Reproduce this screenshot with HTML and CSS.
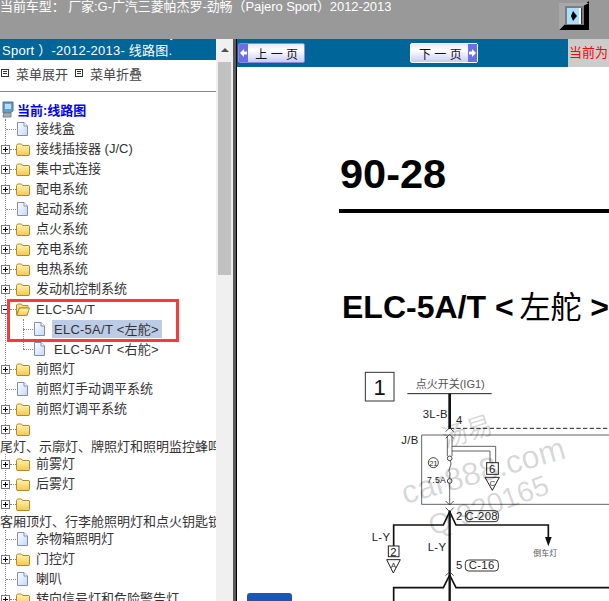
FILE: index.html
```html
<!DOCTYPE html>
<html>
<head>
    <title>线路图</title>
    <meta name="viewport" content="width=device-width, initial-scale=1">
    <link rel="stylesheet" href="styles.css">
</head>

<body>
<svg class="svg-defs">
    <defs>
        <linearGradient id="folderFill" x1="0" y1="0" x2="0" y2="1">
            <stop offset="0" stop-color="#fff4b8"/>
            <stop offset="1" stop-color="#f2c84e"/>
        </linearGradient>
        <linearGradient id="pageFill" x1="0" y1="0" x2="1" y2="1">
            <stop offset="0" stop-color="#ffffff"/>
            <stop offset="1" stop-color="#c4d8f4"/>
        </linearGradient>
    </defs>
    <symbol id="folder" viewBox="0 0 14 14">
        <path d="M.5 3.5 L1.5 2 H5.5 L6.5 3.5 H13 L13.5 4 V12.5 L13 13.5 H1 L.5 12.5 Z" fill="url(#folderFill)" stroke="#b58a25"/>
    </symbol>
    <symbol id="folder-open" viewBox="0 0 14 14">
        <path d="M.5 3 L1.5 2 H5.5 L6.5 3.5 H12 V6 H3.5 L.5 12.5 Z" fill="#f7dc85" stroke="#b58a25"/>
        <path d="M3.5 6 H13.5 L11 13.5 H.7 Z" fill="url(#folderFill)" stroke="#b58a25"/>
    </symbol>
    <symbol id="page" viewBox="0 0 13 14">
        <path d="M1.5 .5 H8 L11.5 4 V13.5 H1.5 Z" fill="url(#pageFill)" stroke="#7f8cc0"/>
        <path d="M8 .5 V4 H11.5" fill="#fff" stroke="#7f8cc0"/>
    </symbol>
    <symbol id="screen" viewBox="0 0 14 17">
        <path d="M2 1 H12 V10 L9 12 H2 Z" fill="#5f9fd6" stroke="#54708f"/>
        <path d="M4 3 H10 V8 H4 Z" fill="#b7dcf5"/>
        <path d="M3 12 H10 V16 H2 Z" fill="#a9afb8" stroke="#7b8088"/>
    </symbol>
</svg>

<div class="app">
    <div class="topbar">
        <div class="topbar-text">当前车型： 厂家:G-广汽三菱帕杰罗-劲畅（Pajero Sport）2012-2013</div>
        <svg class="toggle-frame" width="30" height="29" viewBox="0 0 30 29">
            <path d="M0 29 L6 23 H24 V5 L30 0 V29 Z" fill="#000"/>
            <path d="M0 29 V2 H1 L6 5 V23 Z" fill="#a8a8a8"/>
            <path d="M0 2 H30 L24 5 H6 Z" fill="#a8a8a8"/>
            <rect x="6" y="5" width="19" height="19" fill="#7d7d7d"/>
            <rect x="8" y="7" width="15" height="16" fill="#a9e0ff"/>
            <rect x="20" y="7" width="2" height="16" fill="#fff"/>
            <rect x="22" y="7" width="1" height="16" fill="#333"/>
            <path d="M14 10 L18 15 L14 20 L12 15 Z" fill="#000"/>
        </svg>
    </div>

    <div class="main">
        <div class="sidebar">
            <div class="side-title">
                <div>G-广汽三菱帕杰罗-劲畅（Pajero</div>
                <div>Sport ）-2012-2013- 线路图.</div>
            </div>
            <div class="menu-row">
                <span class="menu-box"></span><span class="menu-text">菜单展开</span>
                <span class="menu-box"></span><span class="menu-text">菜单折叠</span>
            </div>
            <div class="side-rule"></div>

            <div class="root-row">
                <svg class="root-icon" width="14" height="17"><use href="#screen"/></svg>
                <span>当前:线路图</span>
            </div>

            <div class="tree">
                <div class="row"><span class="link long"></span><svg class="ico" width="13" height="14"><use href="#page"/></svg><span class="label">接线盒</span></div>
                <div class="row"><span class="box plus"></span><span class="link"></span><svg class="ico" width="14" height="14"><use href="#folder"/></svg><span class="label">接线插接器 (J/C)</span></div>
                <div class="row"><span class="box plus"></span><span class="link"></span><svg class="ico" width="14" height="14"><use href="#folder"/></svg><span class="label">集中式连接</span></div>
                <div class="row"><span class="box plus"></span><span class="link"></span><svg class="ico" width="14" height="14"><use href="#folder"/></svg><span class="label">配电系统</span></div>
                <div class="row"><span class="link long"></span><svg class="ico" width="13" height="14"><use href="#page"/></svg><span class="label">起动系统</span></div>
                <div class="row"><span class="box plus"></span><span class="link"></span><svg class="ico" width="14" height="14"><use href="#folder"/></svg><span class="label">点火系统</span></div>
                <div class="row"><span class="box plus"></span><span class="link"></span><svg class="ico" width="14" height="14"><use href="#folder"/></svg><span class="label">充电系统</span></div>
                <div class="row"><span class="box plus"></span><span class="link"></span><svg class="ico" width="14" height="14"><use href="#folder"/></svg><span class="label">电热系统</span></div>
                <div class="row"><span class="box plus"></span><span class="link"></span><svg class="ico" width="14" height="14"><use href="#folder"/></svg><span class="label">发动机控制系统</span></div>
                <div class="row"><span class="box"></span><span class="link"></span><svg class="ico" width="14" height="14"><use href="#folder-open"/></svg><span class="label elc">ELC-5A/T</span></div>
                <div class="sub-tree">
                    <div class="row"><span class="link"></span><svg class="ico-sub" width="13" height="14"><use href="#page"/></svg><span class="label elc selected">ELC-5A/T &lt;左舵&gt;</span></div>
                    <div class="row"><span class="link"></span><svg class="ico-sub" width="13" height="14"><use href="#page"/></svg><span class="label elc">ELC-5A/T &lt;右舵&gt;</span></div>
                </div>
                <div class="row"><span class="box plus"></span><span class="link"></span><svg class="ico" width="14" height="14"><use href="#folder"/></svg><span class="label">前照灯</span></div>
                <div class="row"><span class="link long"></span><svg class="ico" width="13" height="14"><use href="#page"/></svg><span class="label">前照灯手动调平系统</span></div>
                <div class="row"><span class="box plus"></span><span class="link"></span><svg class="ico" width="14" height="14"><use href="#folder"/></svg><span class="label">前照灯调平系统</span></div>
                <div class="row"><span class="box plus"></span><span class="link"></span><svg class="ico" width="14" height="14"><use href="#folder"/></svg></div>
                <div class="wrap-row">尾灯、示廓灯、牌照灯和照明监控蜂鸣器</div>
                <div class="row"><span class="box plus"></span><span class="link"></span><svg class="ico" width="14" height="14"><use href="#folder"/></svg><span class="label">前雾灯</span></div>
                <div class="row"><span class="box plus"></span><span class="link"></span><svg class="ico" width="14" height="14"><use href="#folder"/></svg><span class="label">后雾灯</span></div>
                <div class="row"><span class="box plus"></span><span class="link"></span><svg class="ico" width="14" height="14"><use href="#folder"/></svg></div>
                <div class="wrap-row">客厢顶灯、行李舱照明灯和点火钥匙锁照明灯</div>
                <div class="row"><span class="link long"></span><svg class="ico" width="13" height="14"><use href="#page"/></svg><span class="label">杂物箱照明灯</span></div>
                <div class="row"><span class="box plus"></span><span class="link"></span><svg class="ico" width="14" height="14"><use href="#folder"/></svg><span class="label">门控灯</span></div>
                <div class="row"><span class="link long"></span><svg class="ico" width="13" height="14"><use href="#page"/></svg><span class="label">喇叭</span></div>
                <div class="row"><span class="box plus"></span><span class="link"></span><svg class="ico" width="14" height="14"><use href="#folder"/></svg><span class="label">转向信号灯和危险警告灯</span></div>
            </div>
            <div class="red-mark"></div>
        </div>

        <div class="scrollbar">
            <div class="scroll-up"><span class="scroll-arrow"></span></div>
            <div class="scroll-thumb"></div>
        </div>
        <div class="splitter"></div>

        <div class="content">
            <div class="toolbar">
                <div class="nav-btn">
                    <svg class="nav-arrow" width="9" height="18" viewBox="0 0 9 18"><rect width="9" height="18" fill="#6b6fe4"/><path d="M1 9 L5 5 V7.5 H8 V10.5 H5 V13 Z" fill="#fff"/></svg>
                    <span class="nav-text">上 一 页</span>
                </div>
                <div class="nav-btn nav-next">
                    <span class="nav-text">下 一 页</span>
                    <svg class="nav-arrow" width="9" height="18" viewBox="0 0 9 18"><rect width="9" height="18" fill="#6b6fe4"/><path d="M8 9 L4 5 V7.5 H1 V10.5 H4 V13 Z" fill="#fff"/></svg>
                </div>
                <div class="current">当前为</div>
            </div>

            <div class="sheet">
                <div class="sheet-no">90-28</div>
                <div class="sheet-rule"></div>
                <div class="sheet-title">ELC-5A/T &lt; <span class="sheet-cjk">左舵</span> &gt;</div>

                <svg class="diagram" width="259" height="241" viewBox="0 0 777 723">
                    <rect x="46" y="34" width="86" height="86" fill="none" stroke="#333" stroke-width="3"/>
                    <text x="89" y="102" class="d-one" text-anchor="middle">1</text>
                    <text x="197" y="82" class="d-head">点火开关(IG1)</text>
                    <path d="M172 98 H425" stroke="#222" stroke-width="3" fill="none"/>
                    <path d="M299 98 V204" stroke="#111" stroke-width="8" fill="none"/>
                    <text x="218" y="170" class="d-mono">3L-B</text>
                    <text x="318" y="190" class="d-mono">4</text>
                    <path d="M299 202 H777" stroke="#222" stroke-width="3" stroke-dasharray="13 7" fill="none"/>
                    <path d="M777 222 H215 V430 H777" stroke="#444" stroke-width="2.5" fill="none"/>
                    <text x="154" y="250" class="d-mono">J/B</text>

                    <path d="M287 212 L299 200 L311 212 M287 232 L299 220 L311 232" stroke="#333" stroke-width="2.5" fill="none"/>
                    <path d="M292 226 V285 M306 226 V285" stroke="#444" stroke-width="2.5" fill="none"/>
                    <path d="M306 256 H437 V305 M306 270 H420 V305" stroke="#444" stroke-width="2.5" fill="none"/>
                    <rect x="410" y="305" width="35" height="35" fill="#fff" stroke="#222" stroke-width="3"/>
                    <text x="427" y="335" class="d-mono" text-anchor="middle">6</text>
                    <path d="M405 349 H448 L427 388 Z" fill="#fff" stroke="#222" stroke-width="3"/>
                    <text x="427" y="374" class="d-small" text-anchor="middle">C</text>

                    <circle cx="250" cy="305" r="15" fill="none" stroke="#222" stroke-width="2.5"/>
                    <text x="250" y="315" class="d-small" text-anchor="middle">21</text>
                    <circle cx="299" cy="292" r="7" fill="#fff" stroke="#222" stroke-width="2.5"/>
                    <path d="M300 299 C310 312 290 325 300 336 L299 353" stroke="#333" stroke-width="2.5" fill="none"/>
                    <circle cx="299" cy="360" r="7" fill="#fff" stroke="#222" stroke-width="2.5"/>
                    <text x="231" y="366" class="d-mono d-tight">7.5A</text>
                    <path d="M299 367 V432" stroke="#444" stroke-width="2.5" fill="none"/>
                    <path d="M287 420 L299 432 L311 420 M287 440 L299 452 L311 440" stroke="#333" stroke-width="2.5" fill="none"/>

                    <path d="M299 450 V723" stroke="#111" stroke-width="7" fill="none"/>
                    <path d="M131 560 V492 H280 L299 452 L318 492 H595 V530" stroke="#111" stroke-width="5" fill="none"/>
                    <path d="M585 528 H605 L595 556 Z" fill="#111"/>
                    <text x="318" y="476" class="d-mono">2</text>
                    <rect x="346" y="449" width="99" height="33" rx="10" fill="#fff" stroke="#333" stroke-width="3"/>
                    <text x="395" y="477" class="d-mono" text-anchor="middle">C-208</text>
                    <text x="65" y="540" class="d-mono">L-Y</text>
                    <text x="233" y="570" class="d-mono">L-Y</text>
                    <text x="550" y="584" class="d-note">倒车灯</text>
                    <rect x="115" y="555" width="32" height="32" fill="#fff" stroke="#222" stroke-width="3"/>
                    <text x="131" y="584" class="d-mono" text-anchor="middle">2</text>
                    <path d="M110 596 H151 L130 636 Z" fill="#fff" stroke="#222" stroke-width="3"/>
                    <text x="130" y="620" class="d-small" text-anchor="middle">A</text>
                    <text x="318" y="624" class="d-mono">5</text>
                    <rect x="346" y="597" width="99" height="33" rx="10" fill="#fff" stroke="#333" stroke-width="3"/>
                    <text x="395" y="625" class="d-mono" text-anchor="middle">C-16</text>
                    <path d="M287 644 L299 632 L311 644" stroke="#333" stroke-width="2.5" fill="none"/>
                    <path d="M131 723 V680 H280 L299 642 L318 680 H777" stroke="#111" stroke-width="5" fill="none"/>

                    <text x="285" y="262" class="d-mark d-mark-cjk" transform="rotate(-18 285 262)">汤易</text>
                    <text x="165" y="430" class="d-mark" transform="rotate(-16 165 430)">car888.com</text>
                    <text x="248" y="525" class="d-mark d-mark-qq" transform="rotate(-20 248 525)">Q 920165</text>
                </svg>
            </div>
            <div class="blue-tab"></div>
        </div>
    </div>
</div>
</body>
</html>
```

FILE: styles.css
```css
html, body {
    margin: 0;
    padding: 0;
    height: 100%;
    overflow: hidden;
    background: #fff;
    font-family: "Liberation Sans", "Noto Sans CJK SC", sans-serif;
}
.svg-defs {
    position: absolute;
    width: 0;
    height: 0;
}
.app {
    display: flex;
    flex-direction: column;
    height: 601px;
    overflow: hidden;
}

/* top bar */
.topbar {
    display: flex;
    justify-content: space-between;
    height: 39px;
    flex: none;
    background-color: #999999;
    color: #fff;
    font-size: 13px;
}
.topbar-text {
    line-height: 13px;
    letter-spacing: -0.07px;
    white-space: nowrap;
    overflow: hidden;
}
.toggle-frame {
    flex: none;
    margin: 1px 20px 0 0;
}

.main {
    display: flex;
    flex: 1;
    min-height: 0;
}

/* left menu */
.sidebar {
    position: relative;
    width: 216px;
    flex: none;
    overflow: hidden;
}
.side-title {
    display: flex;
    flex-direction: column;
    justify-content: flex-end;
    height: 21px;
    overflow: hidden;
    padding-left: 2px;
    background-color: #006699;
    color: #fff;
    font-size: 13px;
    letter-spacing: 0.25px;
    line-height: 18px;
    white-space: nowrap;
}
.side-title div {
    flex: none;
}
.menu-row {
    display: flex;
    align-items: center;
    height: 26px;
    font-size: 13px;
    color: #444;
}
.menu-box {
    box-sizing: border-box;
    width: 8px;
    height: 8px;
    margin-left: 1px;
    border: 1px solid #333;
    background: linear-gradient(#333, #333) center 1px / 4px 1px no-repeat,
                linear-gradient(#333, #333) center 3px / 4px 1px no-repeat;
}
.menu-text {
    margin: 0 6px 0 7px;
}
.side-rule {
    height: 1px;
    margin-top: 5px;
    margin-bottom: 7px;
    background-color: #888;
}
.root-row {
    display: flex;
    align-items: center;
    height: 20px;
    font-size: 13px;
    font-weight: bold;
    color: #0000ff;
}
.root-icon {
    margin: 0 2px 0 1px;
}

.tree {
    margin-left: 5px;
    border-left: 1px dotted #888;
    font-size: 13px;
    color: #333;
}
.row {
    display: flex;
    align-items: center;
    height: 20px;
    white-space: nowrap;
}
.box {
    position: relative;
    box-sizing: border-box;
    flex: none;
    width: 9px;
    height: 9px;
    margin-left: -5px;
    border: 1px solid #777;
    background: #fff linear-gradient(#000, #000) center / 5px 1px no-repeat;
}
.plus::after {
    content: "";
    position: absolute;
    left: 3px;
    top: 1px;
    width: 1px;
    height: 5px;
    background-color: #000;
}
.link {
    flex: none;
    width: 6px;
    border-top: 1px dotted #888;
}
.link.long {
    width: 10px;
}
.ico {
    flex: none;
    margin-right: 6px;
}
svg.ico[width="13"] {
    margin-right: 7px;
}
.ico-sub {
    flex: none;
    margin-right: 8px;
}
.label {
    line-height: 18px;
}
.elc {
    padding-top: 1px;
    line-height: 17px;
    letter-spacing: 0.25px;
}
.selected {
    margin-left: -2px;
    padding: 1px 3px 0 2px;
    background-color: #bccbe6;
}
.sub-tree {
    position: relative;
    margin-left: 17px;
}
.sub-tree::before {
    content: "";
    position: absolute;
    left: 0;
    top: 0;
    bottom: 10px;
    border-left: 1px dotted #888;
}
.sub-tree .link {
    width: 10px;
}
.wrap-row {
    height: 15px;
    margin-left: -6px;
    background-color: #fff;
    font-size: 13px;
    line-height: 15px;
    white-space: nowrap;
}
.red-mark {
    position: absolute;
    left: 7px;
    top: 260px;
    box-sizing: border-box;
    width: 172px;
    height: 43px;
    border: 3px solid #f83a3a;
}

/* scrollbar and splitter */
.scrollbar {
    width: 17px;
    flex: none;
    background-color: #f0f0f0;
}
.scroll-up {
    display: flex;
    justify-content: center;
    align-items: center;
    height: 22px;
    margin-bottom: 1px;
}
.scroll-arrow {
    border-left: 4px solid transparent;
    border-right: 4px solid transparent;
    border-bottom: 4px solid #505050;
}
.scroll-thumb {
    width: 13px;
    height: 213px;
    margin-left: 2px;
    background-color: #c1c1c1;
}
.splitter {
    width: 3px;
    flex: none;
    border-right: 1px solid #000;
    background-color: #5a5a5a;
}

/* right page */
.content {
    position: relative;
    flex: 1;
    min-width: 0;
    overflow: hidden;
}
.toolbar {
    display: flex;
    align-items: center;
    height: 28px;
    background-color: #006699;
}
.nav-btn {
    box-sizing: border-box;
    display: flex;
    align-items: center;
    justify-content: space-between;
    width: 67px;
    height: 20px;
    margin-left: 1px;
    border: 1px solid #8b8bdc;
    border-radius: 2px;
    background: linear-gradient(#e9e9ff, #ffffff 35%, #c9c9f6);
    font-size: 12px;
    color: #111;
}
.nav-next {
    width: 68px;
    margin-left: 105px;
    border-color: #fff;
    padding-left: 8px;
}
.nav-arrow {
    flex: none;
}
.nav-text {
    margin-right: 6px;
    white-space: nowrap;
}
.nav-next .nav-text {
    margin-right: 0;
}
.current {
    align-self: stretch;
    width: 40px;
    margin-left: auto;
    padding-left: 1px;
    background-color: #cccccc;
    color: #ff0000;
    font-size: 13px;
    line-height: 28px;
    white-space: nowrap;
}

.sheet {
    width: 372px;
    padding: 86px 0 0 102px;
    color: #000;
}
.sheet-no {
    margin-left: 1px;
    font-size: 41.5px;
    font-weight: bold;
    line-height: 42px;
}
.sheet-rule {
    width: 270px;
    height: 4px;
    margin-top: 14px;
    background-color: #000;
}
.sheet-title {
    width: 300px;
    margin: 76px 0 0 3px;
    font-size: 32px;
    font-weight: bold;
    line-height: 36px;
    white-space: nowrap;
}
.sheet-cjk {
    margin-left: -3px;
    font-size: 31px;
    font-weight: normal;
}
.diagram {
    display: block;
    margin: 35px 0 0 11px;
}
.d-one {
    font-size: 66px;
    fill: #111;
}
.d-head {
    font-size: 33px;
    fill: #555;
}
.d-mono {
    font-family: "Liberation Sans Narrow", "Liberation Sans", sans-serif;
    font-size: 34px;
    fill: #222;
    letter-spacing: 1px;
}
.d-tight {
    font-size: 26px;
}
.d-small {
    font-size: 24px;
    fill: #333;
}
.d-note {
    font-size: 24px;
    fill: #555;
}
.d-mark {
    font-size: 97px;
    fill: #000;
    fill-opacity: 0.16;
}
.d-mark-cjk {
    font-size: 78px;
}
.d-mark-qq {
    font-size: 86px;
}
.blue-tab {
    position: absolute;
    left: 10px;
    top: 554px;
    width: 45px;
    height: 12px;
    border-radius: 3px 3px 0 0;
    background-color: #1a56b4;
}
```
